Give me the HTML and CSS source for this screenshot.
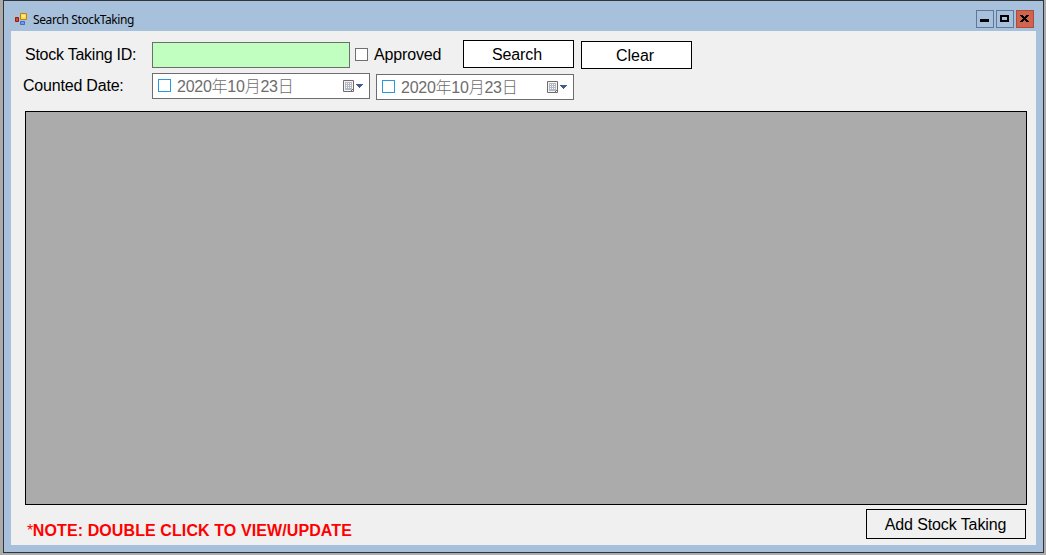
FILE: index.html
```html
<!DOCTYPE html>
<html lang="en">
<head>
<meta charset="utf-8">
<title>Search StockTaking</title>
<link rel="stylesheet" href="styles.css">
</head>
<body>
<svg width="0" height="0" class="defs" aria-hidden="true">
  <symbol id="calendar" viewBox="0 0 21 13">
    <path d="M.5.5h10v9h-2v2h-8z" fill="#f4f4f6" stroke="#756a68"/>
    <path d="M2 2h7v8H2z" fill="#b4b9c6"/>
    <path d="M3 3h1v1H3zM5 3h1v1H5zM7 3h1v1H7zM3 5h1v1H3zM5 5h1v1H5zM7 5h1v1H7zM3 7h1v1H3zM5 7h1v1H5zM7 7h1v1H7z" fill="#fff"/>
    <path d="M8 11.500h2.500V9" fill="none" stroke="#756a68"/>
    <path d="M13 4h7v1h-1v1h-1v1h-1v1h-1V7h-1V6h-1V5h-1z" fill="#425a8c"/>
  </symbol>
</svg>
<div class="window">
  <header class="titlebar">
    <svg class="app-icon" width="14" height="14" viewBox="0 0 14 14">
      <path d="M.5.5h12v12H.5z" fill="none" stroke="#b8bdc2"/>
      <path d="M1.500 5.500h3v4h-3z" fill="#c84b3c" stroke="#9c1810"/>
      <path d="M6.500 1.500h6v6h-6z" fill="#ffd956" stroke="#ba8508"/>
      <path d="M8 3h3v2H8z" fill="#fff0a0"/>
      <path d="M6.500 9.500h4v3h-4z" fill="#6b9cf0" stroke="#3d6ccb"/>
    </svg>
    <h1 class="title">Search StockTaking</h1>
    <div class="controls">
      <button class="control" aria-label="Minimize"><svg width="16" height="16"><path d="M3 8h9v3H3z"/></svg></button>
      <button class="control" aria-label="Maximize"><svg width="16" height="16"><path fill-rule="evenodd" d="M3 4h9v7H3zM5 6v3h5V6z"/></svg></button>
      <button class="control close" aria-label="Close"><svg width="16" height="16"><path d="M3 4h3v1h1v1h1V5h1V4h3v1h-1v1h-1v1H9v1h1v1h1v1h1v1H9v-1H8V9H7v1H6v1H3v-1h1V9h1V8h1V7H5V6H4V5H3z"/></svg></button>
    </div>
  </header>
  <main class="client">
    <div class="row row-id">
      <label class="label id-label">Stock Taking ID:</label>
      <div class="id-input"></div>
      <span class="check"></span>
      <label class="approved">Approved</label>
      <button class="button search"><span>Search</span></button>
      <button class="button clear"><span>Clear</span></button>
    </div>
    <div class="row row-date">
      <label class="label date-label">Counted Date:</label>
      <div class="date"><span class="date-check"></span><span class="date-text">2020年10月23日</span><svg class="cal" width="21" height="13"><use href="#calendar"/></svg></div>
      <div class="date date-to"><span class="date-check"></span><span class="date-text">2020年10月23日</span><svg class="cal" width="21" height="13"><use href="#calendar"/></svg></div>
    </div>
    <div class="grid"></div>
    <footer class="footer">
      <p class="note"><span class="star">*</span>NOTE: DOUBLE CLICK TO VIEW/UPDATE</p>
      <button class="button add"><span>Add Stock Taking</span></button>
    </footer>
  </main>
</div>
</body>
</html>
```
FILE: styles.css
```css
* { box-sizing: border-box; }
body {
  margin: 0;
  height: 555px;
  padding: 0 2px 2px 3px;
  overflow: hidden;
  background: #ababab;
  font: 16px/20px "Liberation Sans", "Noto Sans CJK JP", sans-serif;
  color: #000;
}
.defs { display: block; }
.window {
  width: 1041px;
  height: 553px;
  padding: 0 7px;
  border: 1px solid #333537;
  background: #a7c0dc;
}
.titlebar {
  display: flex;
  height: 30px;
  padding: 9px 2px 0 3px;
}
.app-icon { flex: none; margin: 2px 5px 0 0; }
.title {
  margin: 0;
  padding-top: 1px;
  font: 12px/18px "Noto Sans", sans-serif;
  letter-spacing: -0.4px;
}
.controls { display: flex; gap: 2px; margin-left: auto; }
.control {
  width: 18px;
  height: 18px;
  padding: 0;
  border: 1px solid #60779a;
  background: #a7c0dc;
}
.control svg { display: block; }
.close { border-color: #b04a3c; background: #d0644f; }
.client { height: 514px; background: #f0f0f0; }
.row { display: flex; align-items: flex-start; }
.row-id { height: 42px; padding: 9px 0 0 14px; }
.row-date { height: 38px; padding-left: 12px; }
.label { flex: none; white-space: nowrap; }
.id-label { width: 127px; padding-top: 5px; letter-spacing: -0.25px; }
.id-input {
  width: 198px;
  height: 26px;
  margin-top: 2px;
  border: 1px solid #6d6d6d;
  background: #c0ffc0;
}
.check {
  width: 13px;
  height: 13px;
  margin: 8px 6px 0 5px;
  border: 1px solid #707070;
  background: #fff;
}
.approved { width: 89px; padding-top: 5px; letter-spacing: -0.15px; }
.button {
  padding: 0;
  border: 1px solid #000;
  background: #fff;
  color: #000;
  font: inherit;
}
.search { width: 111px; height: 28px; padding: 2px 3px 0 0; letter-spacing: -0.1px; }
.clear { width: 111px; height: 28px; margin: 1px 0 0 7px; padding: 2px 3px 0 0; }
.date-label { width: 129px; padding-top: 3px; letter-spacing: -0.2px; }
.date {
  display: flex;
  width: 218px;
  height: 26px;
  padding: 5px 5px 0;
  border: 1px solid #6d6d6d;
  background: #fff;
  color: #6d6d6d;
}
.date-to { width: 198px; margin: 1px 0 0 6px; }
.date-check { width: 13px; height: 13px; border: 1px solid #279bd8; }
.date-text {
  margin: -2px 0 0 6px;
  font-weight: 300;
  letter-spacing: -0.25px;
  white-space: nowrap;
}
.cal { margin: 1px 0 0 auto; }
.grid {
  width: 1002px;
  height: 394px;
  margin-left: 14px;
  border: 1px solid #000;
  background: #ababab;
}
.footer { display: flex; justify-content: space-between; padding: 4px 10px 0 16px; }
.note {
  margin: 12px 0 0;
  color: #f00;
  font-weight: bold;
  line-height: 20px;
  letter-spacing: 0.1px;
}
.star { font-weight: normal; letter-spacing: -0.4px; }
.add { width: 160px; height: 30px; padding: 2px 1px 0 0; letter-spacing: -0.1px; background: #f0f0f0; }
```
